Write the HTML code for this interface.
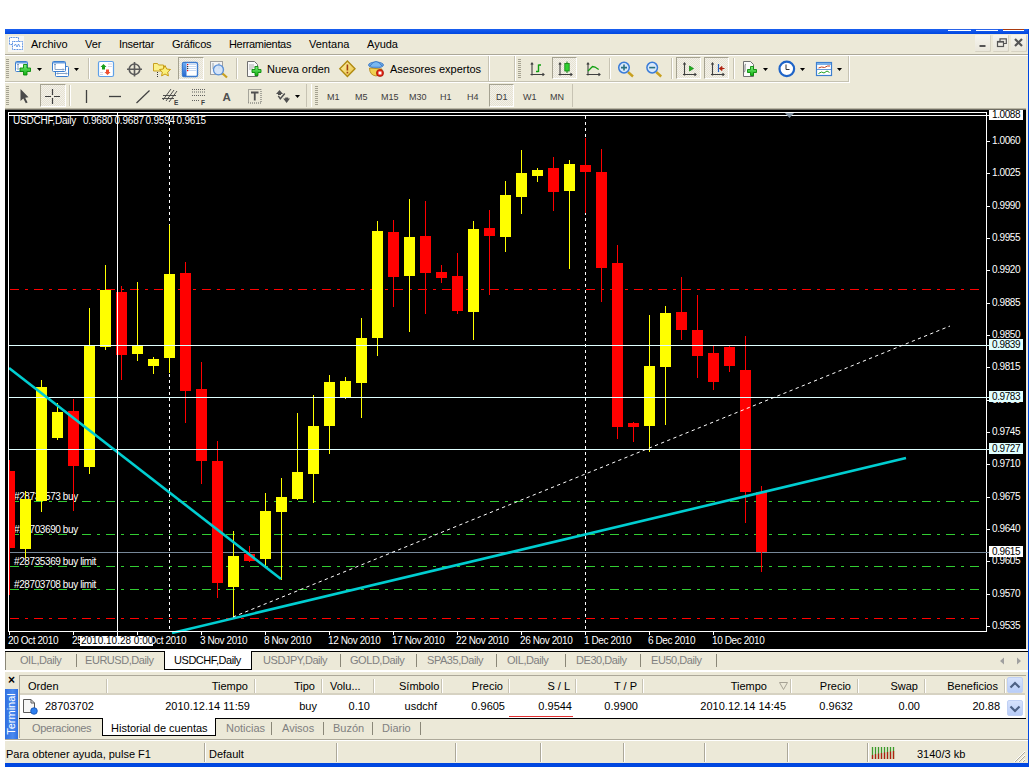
<!DOCTYPE html>
<html><head><meta charset="utf-8">
<style>
*{margin:0;padding:0;box-sizing:border-box}
html,body{width:1032px;height:767px;overflow:hidden;background:#fff;font-family:"Liberation Sans",sans-serif;font-size:11px;color:#000}
.a{position:absolute;white-space:nowrap}
.mi{position:absolute;top:37px;font-size:11px;line-height:14px}
.t1{position:absolute;top:62px;font-size:11px;line-height:14px}
.tf{position:absolute;top:91px;font-size:9px;line-height:12px;color:#3c3c3c}
.gray{color:#808080}
.grip{width:3px;background:repeating-linear-gradient(#fff 0 0px,#a5a291 0 1px,#ECE9D8 1px 2px)}
.tsep{width:1px;background:#c7c3b3;box-shadow:1px 0 0 #fff}
.pb{border:1px solid;border-color:#a5a291 #fff #fff #a5a291;background-color:#f3f1ea;background-image:linear-gradient(45deg,#e6e2d2 25%,transparent 25%,transparent 75%,#e6e2d2 75%),linear-gradient(45deg,#e6e2d2 25%,transparent 25%,transparent 75%,#e6e2d2 75%);background-size:2px 2px;background-position:0 0,1px 1px}
.wb{top:35px;width:16px;height:17px;background:linear-gradient(#f6f5ef,#e9e6da);border-radius:1px;box-shadow:inset -1px -1px 0 #d6d2c2}
.tb{top:653px;font-size:11px;line-height:14px;letter-spacing:-0.45px}
.sep{top:654px;width:1px;height:13px;background:#8a8778}
.tb2{top:721px;font-size:11px;line-height:14px}
.sep2{top:722px;width:1px;height:13px;background:#8a8778}
.th{top:679px;font-size:11px;line-height:14px}
.tr{top:699px;font-size:11px;line-height:14px}
.st{top:747px;font-size:11px;line-height:14px}
.ssep{top:743px;width:1px;height:19px;background:#aca899;box-shadow:1px 0 0 #fff}
.ct{font-family:"Liberation Sans",sans-serif;font-size:10px;fill:#fff;letter-spacing:-0.4px;white-space:pre}
</style></head><body>
<!-- window bg -->
<div class="a" style="left:5px;top:29px;width:1024px;height:738px;background:#ECE9D8"></div>
<!-- title bar strip -->
<div class="a" style="left:5px;top:29px;width:1024px;height:5px;background:linear-gradient(#1a5ff0,#0047e0)"></div>
<div class="a" style="left:1028px;top:29px;width:1px;height:738px;background:#0047e0"></div>
<div class="a" style="left:5px;top:763px;width:1024px;height:4px;background:#0047e0"></div>
<!-- MENU -->
<!-- app icon -->
<svg class="a" style="left:8px;top:36px" width="16" height="16">
<rect x="0" y="0" width="16" height="16" fill="#f7f6f2"/>
<rect x="1.5" y="1.5" width="9" height="7" fill="#fff" stroke="#4a86e0" stroke-dasharray="1 0.6"/>
<rect x="4.5" y="5.5" width="10" height="8" fill="#fff" stroke="#4a86e0" stroke-dasharray="1 0.6"/>
<path d="M6 10 L7.5 8 L9 11 L10.5 8 L12 11" fill="none" stroke="#4a86e0" stroke-width="0.8"/>
</svg>
<!-- window buttons -->
<div class="a wb" style="left:975px"></div>
<div class="a wb" style="left:993px"></div>
<div class="a wb" style="left:1011px"></div>
<svg class="a" style="left:975px;top:35px" width="52" height="17">
<rect x="4.5" y="10" width="6" height="2" fill="#555"/>
<rect x="22.5" y="6.5" width="6" height="5" fill="none" stroke="#555" stroke-width="1.2"/><rect x="22" y="6" width="7" height="1.6" fill="#555"/>
<path d="M25 6.5 V3.8 H31.3 V8.5 H29" fill="none" stroke="#555" stroke-width="1.2"/>
<path d="M40 4 L47 11 M47 4 L40 11" stroke="#555" stroke-width="2.2"/>
</svg>
<!-- title button bottoms -->
<div class="a" style="left:948px;top:29px;width:23px;height:1px;background:#2a63e8"></div>
<div class="a" style="left:948px;top:30px;width:23px;height:1px;background:#fff"></div>
<div class="a" style="left:976px;top:29px;width:22px;height:1px;background:#2a63e8"></div>
<div class="a" style="left:976px;top:30px;width:22px;height:1px;background:#fff"></div>
<div class="a" style="left:1003px;top:29px;width:21px;height:1px;background:#a83a10"></div>
<div class="a" style="left:1003px;top:30px;width:21px;height:1px;background:#fff"></div>

<!-- grippers -->
<div class="a grip" style="left:6px;top:59px;height:19px"></div>
<div class="a grip" style="left:6px;top:86px;height:19px"></div>
<div class="a grip" style="left:518px;top:59px;height:19px"></div>
<div class="a grip" style="left:315px;top:86px;height:19px"></div>
<!-- toolbar edges -->
<div class="a" style="left:488px;top:56px;width:1px;height:25px;background:#c7c3b3"></div>
<div class="a" style="left:514px;top:56px;width:1px;height:25px;background:#c7c3b3"></div><div class="a" style="left:515px;top:56px;width:1px;height:25px;background:#fff"></div><div class="a" style="left:489px;top:56px;width:1px;height:25px;background:#fff"></div>
<div class="a" style="left:848px;top:56px;width:1px;height:26px;background:#c7c3b3"></div><div class="a" style="left:849px;top:56px;width:1px;height:27px;background:#fff"></div>
<div class="a" style="left:306px;top:84px;width:1px;height:23px;background:#c7c3b3"></div>
<div class="a" style="left:311px;top:84px;width:1px;height:23px;background:#fff"></div>
<div class="a" style="left:572px;top:84px;width:1px;height:23px;background:#c7c3b3"></div>
<!-- separators -->
<div class="a tsep" style="left:88px;top:58px;height:21px"></div>
<div class="a tsep" style="left:236px;top:58px;height:21px"></div>
<div class="a tsep" style="left:609px;top:58px;height:21px"></div>
<div class="a tsep" style="left:671px;top:58px;height:21px"></div>
<div class="a tsep" style="left:733px;top:58px;height:21px"></div>
<div class="a tsep" style="left:69px;top:85px;height:21px"></div>
<!-- pressed buttons -->
<div class="a pb" style="left:178px;top:57px;width:26px;height:23px"></div>
<div class="a pb" style="left:552px;top:57px;width:25px;height:22px"></div>
<div class="a pb" style="left:676px;top:57px;width:25px;height:22px"></div>
<div class="a pb" style="left:704px;top:57px;width:25px;height:22px"></div>
<div class="a pb" style="left:40px;top:84px;width:26px;height:23px"></div>
<div class="a pb" style="left:489px;top:84px;width:25px;height:23px"></div>

<svg class="a" style="left:0;top:54px" width="860" height="30">
<defs>
<linearGradient id="gp" x1="0" y1="0" x2="0" y2="1"><stop offset="0" stop-color="#7cf07c"/><stop offset="1" stop-color="#10b010"/></linearGradient>
<linearGradient id="bl" x1="0" y1="0" x2="0" y2="1"><stop offset="0" stop-color="#6aaaf0"/><stop offset="1" stop-color="#2a6ad0"/></linearGradient>
</defs>
<!-- new chart -->
<rect x="15.5" y="7.5" width="12" height="10" rx="1" fill="#fff" stroke="#3c7fd0"/>
<rect x="16" y="8" width="11" height="1.5" fill="#6aa0e0"/>
<path d="M18 10 V15.5 M17 11 L18 10 L19 11 M17 14.5 L18 15.5 L19 14.5" stroke="#7a98c0" fill="none" stroke-width="0.9"/>
<path d="M23.5 10.5 h3.5 v3.5 h3.5 v3.5 h-3.5 v3.5 h-3.5 v-3.5 h-3.5 v-3.5 h3.5z" fill="url(#gp)" stroke="#0a8a0a" stroke-width="0.9"/>
<path d="M37 14 h5 l-2.5 3z" fill="#000"/>
<!-- profiles -->
<rect x="55.5" y="12.5" width="13" height="10" rx="1" fill="#fff" stroke="#3c7fd0"/>
<path d="M57 19.5 H67 M57.8 18.5 l-1 1 l1 1 M66.2 18.5 l1 1 l-1 1" stroke="#7a98c0" fill="none" stroke-width="0.9"/>
<rect x="52.5" y="7.5" width="13" height="10" rx="1" fill="#fff" stroke="#3c7fd0"/>
<rect x="53" y="8" width="12" height="1.5" fill="#6aa0e0"/>
<path d="M55 10 V15.5 H64 M54 11 l1 -1 l1 1 M63 14.5 l1 1 l-1 1" stroke="#7a98c0" fill="none" stroke-width="0.9"/>
<path d="M74 14 h5 l-2.5 3z" fill="#000"/>
<!-- market watch -->
<rect x="98.5" y="7.5" width="15" height="15" rx="1.5" fill="#fff" stroke="#5ea0e8" stroke-width="1.2"/>
<path d="M100.5 13 L103.5 10 L106.5 13 H105 V15.5 H102 V13z" fill="#1aa01a"/>
<path d="M104.5 18 L107.5 21 L110.5 18 H109 V15.5 H106 V18z" fill="#f05030"/>
<path d="M108 10 h4 M108 12.5 h4 M100 18.5 h3 M100 20.5 h3" stroke="#ccd" stroke-width="0.8"/>
<!-- data window crosshair -->
<circle cx="134.5" cy="15.3" r="5.3" fill="none" stroke="#5a5a5a" stroke-width="1.6"/>
<path d="M134.5 8 V22.5 M127 15.3 H142" stroke="#5a5a5a" stroke-width="1.6"/>
<!-- folder star -->
<path d="M153.5 9.5 h4 l1 1.5 h5 v6 h-10z" fill="#fbf08a" stroke="#c8a020"/>
<path d="M157.5 18 v5" stroke="#333" stroke-dasharray="1 1"/>
<path d="M165 11.5 l1.7 3.5 l3.8 0.5 l-2.8 2.6 l0.7 3.8 l-3.4 -1.9 l-3.4 1.9 l0.7 -3.8 l-2.8 -2.6 l3.8 -0.5z" fill="#fbf07a" stroke="#c89a10" stroke-width="1"/>
<!-- navigator -->
<rect x="182.5" y="8.5" width="15" height="14" rx="1.5" fill="#fff" stroke="#3c7bcf" stroke-width="1.4"/>
<rect x="183" y="9" width="3.5" height="13" fill="url(#bl)"/>
<path d="M188 10.5 H196 M188 12.5 H196 M188 14.5 H196 M188 16.5 H196" stroke="#b8cff0" stroke-width="0.8"/>
<rect x="187" y="10" width="1.2" height="1.2" fill="#f00"/><rect x="187" y="12" width="1.2" height="1.2" fill="#333"/><rect x="187" y="14" width="1.2" height="1.2" fill="#333"/><rect x="187" y="16" width="1.2" height="1.2" fill="#f00"/>
<!-- zoom chart -->
<rect x="210.5" y="7.5" width="12" height="13" fill="#f4f4f4" stroke="#a0a0a0"/>
<path d="M213 9 v6 M219 9 v6" stroke="#8090a0" stroke-width="0.8"/>
<path d="M222 19 L227 23.5" stroke="#c8a020" stroke-width="2.2"/>
<circle cx="218.5" cy="15.8" r="5" fill="#cfe0f8" fill-opacity="0.85" stroke="#5a90d8" stroke-width="1.3"/>
<!-- new order -->
<path d="M247.5 7.5 h7 l3 3 v12 h-10z" fill="#fafafa" stroke="#707070"/>
<path d="M249 11 h5 M249 13 h6 M249 15 h4" stroke="#999" stroke-width="0.8"/>
<path d="M255 12.5 h3 v3 h3 v3 h-3 v3 h-3 v-3 h-3 v-3 h3z" fill="url(#gp)" stroke="#0a8a0a" stroke-width="0.9"/>
<!-- diamond -->
<defs><linearGradient id="dg" x1="0" y1="0" x2="1" y2="1"><stop offset="0" stop-color="#fff4b0"/><stop offset="1" stop-color="#e8c040"/></linearGradient></defs><path d="M347.4 7 L355 14.7 L347.4 22.4 L339.8 14.7z" fill="url(#dg)" stroke="#b08a10" stroke-width="1.4"/>
<path d="M347.4 10.5 v6" stroke="#a04010" stroke-width="1.6"/><rect x="346.6" y="17.8" width="1.6" height="1.6" fill="#a04010"/>
<!-- expert hat -->
<ellipse cx="376" cy="11" rx="7.5" ry="3" fill="#6aa8e8" stroke="#3070c0" stroke-width="0.8"/>
<path d="M370 12 q6 -9 12 0" fill="#7ab8f0" stroke="#3070c0" stroke-width="0.8"/>
<path d="M369.5 14 q0 7 6.5 8 q5 -1 6 -7z" fill="#f0d050" stroke="#b08010" stroke-width="0.8"/>
<circle cx="380" cy="19" r="3.6" fill="#e02010" stroke="#901000" stroke-width="0.6"/>
<rect x="378.5" y="17.5" width="3" height="3" fill="#fff"/>
<!-- bar chart -->
<path d="M532 9 V21.5 M530.5 20.5 H544 M530.8 10.5 L532 9 L533.2 10.5 M542.5 19.3 L544 20.5 L542.5 21.7" stroke="#404040" fill="none" stroke-width="1.1"/>
<path d="M538.5 10.5 V18 M536 17.5 h2.5 M538.5 11 h2.5" stroke="#10a010" stroke-width="1.4" fill="none"/>
<!-- candle chart -->
<path d="M560 9 V21.5 M558.5 20.5 H572 M558.8 10.5 L560 9 L561.2 10.5 M570.5 19.3 L572 20.5 L570.5 21.7" stroke="#404040" fill="none" stroke-width="1.1"/>
<path d="M567 7.5 V19" stroke="#108010" stroke-width="1"/>
<rect x="564.8" y="9.5" width="4.4" height="7.5" fill="#30d030" stroke="#108010" stroke-width="0.8"/>
<!-- line chart -->
<path d="M588 9 V21.5 M586.5 20.5 H600 M586.8 10.5 L588 9 L589.2 10.5 M598.5 19.3 L600 20.5 L598.5 21.7" stroke="#404040" fill="none" stroke-width="1.1"/>
<path d="M588 17 L592.5 12.5 L595 13 L598.7 15.5" stroke="#10a010" stroke-width="1.3" fill="none"/>
<!-- zoom in/out -->
<path d="M628 18 L633 22.5" stroke="#c8a020" stroke-width="2.4"/>
<circle cx="624" cy="13.6" r="5.3" fill="#d8e8fa" stroke="#3a7cd8" stroke-width="1.5"/>
<path d="M621 13.6 h6 M624 10.6 v6" stroke="#2a7080" stroke-width="1.6"/>
<path d="M656.2 18 L661.2 22.5" stroke="#c8a020" stroke-width="2.4"/>
<circle cx="652.2" cy="13.6" r="5.3" fill="#d8e8fa" stroke="#3a7cd8" stroke-width="1.5"/>
<path d="M649.2 13.6 h6" stroke="#2a7080" stroke-width="1.6"/>
<!-- autoscroll -->
<path d="M684.5 9 V21.5 M683 20.5 H696 M683.3 10.5 L684.5 9 L685.7 10.5 M694.5 19.3 L696 20.5 L694.5 21.7" stroke="#404040" fill="none" stroke-width="1.1"/>
<path d="M689.5 12 L693.5 14.5 L689.5 17z" fill="#20b020" stroke="#108010" stroke-width="0.7"/>
<!-- chart shift -->
<path d="M712.5 9 V21.5 M711 20.5 H724 M711.3 10.5 L712.5 9 L713.7 10.5 M722.5 19.3 L724 20.5 L722.5 21.7" stroke="#404040" fill="none" stroke-width="1.1"/>
<path d="M718.5 10 V18" stroke="#2060c0" stroke-width="1.2"/>
<path d="M719.5 14.5 h5 M719.5 14.5 l2.5 -2 v4z" stroke="#b02010" fill="#b02010" stroke-width="1"/>
<!-- indicators -->
<path d="M743.5 7.5 h7 l3 3 v12 h-10z" fill="#fafafa" stroke="#707070"/>
<path d="M746 10 q-1 0 -1 2 v4 q0 2 -1 2" stroke="#666" fill="none" stroke-width="0.8"/>
<path d="M750.5 12.5 h3 v3 h3 v3 h-3 v3 h-3 v-3 h-3 v-3 h3z" fill="url(#gp)" stroke="#0a8a0a" stroke-width="0.9"/>
<path d="M763 14 h5 l-2.5 3z" fill="#000"/>
<!-- clock -->
<circle cx="786.8" cy="14.9" r="7.3" fill="#fff" stroke="#1e64c8" stroke-width="2.2"/>
<path d="M786 10.5 V15.5 H789.5" stroke="#333" stroke-width="1" fill="none"/>
<path d="M800 14 h5 l-2.5 3z" fill="#000"/>
<!-- templates -->
<rect x="816.5" y="8.5" width="15" height="13" fill="#fff" stroke="#3c7fd0" stroke-width="1.2"/>
<rect x="817" y="9" width="14" height="2" fill="#7ab0e8"/>
<path d="M817 15.5 H831" stroke="#3c7fd0" stroke-width="0.8"/>
<path d="M818.5 14 l3 -1 l3 0.5 l3 -1.5 l2.5 0" stroke="#c04020" fill="none" stroke-width="1"/>
<path d="M818.5 19.5 l3 -1.5 l2.5 1 l3 -2 l2.5 1.5" stroke="#20a020" fill="none" stroke-width="1"/>
<path d="M837 14 h5 l-2.5 3z" fill="#000"/>
</svg>

<svg class="a" style="left:0;top:82px" width="310" height="28">
<!-- arrow cursor -->
<path d="M20.5 7 L20.5 19 L23.3 16.5 L25.8 21.3 L27.6 20.4 L25.2 15.7 L28.5 15.3z" fill="#4a4a4a"/>
<!-- crosshair -->
<path d="M52.5 7 V13 M52.5 16 V22 M45 14.5 H51 M54 14.5 H60" stroke="#404040" stroke-width="1.2"/>
<!-- vertical line -->
<path d="M86.5 8 V21" stroke="#404040" stroke-width="1.3"/>
<!-- horizontal line -->
<path d="M109 14.5 H121" stroke="#404040" stroke-width="1.3"/>
<!-- trend line -->
<path d="M136.5 21 L149.5 8.5" stroke="#404040" stroke-width="1.2"/>
<!-- channel E -->
<path d="M163 18 L171 7 M166 19 L174 8 M169 20 L177 9 M163 13.5 H176 M162 16.5 H174" stroke="#404040" stroke-width="0.9"/>
<text x="174" y="23" font-family="Liberation Sans" font-size="6.5" font-weight="bold" fill="#404040">E</text>
<!-- fibo F -->
<path d="M192 7.5 H205 M192 10 H205 M192 13.5 H205 M192 18.5 H200" stroke="#505050" stroke-width="0.9" stroke-dasharray="1 1"/>
<text x="201" y="23" font-family="Liberation Sans" font-size="6.5" font-weight="bold" fill="#404040">F</text>
<!-- A -->
<text x="222.5" y="19.3" font-family="Liberation Sans" font-size="11.5" font-weight="bold" fill="#505050">A</text>
<!-- T label -->
<rect x="248.5" y="7.5" width="12.5" height="13.5" fill="none" stroke="#505050" stroke-width="0.9" stroke-dasharray="1 1"/>
<path d="M251 10.5 H258.5 M254.75 10.5 V18.5" stroke="#505050" stroke-width="1.8"/>
<!-- arrows -->
<path d="M276 12 L279.5 8 L283 12z M278 11.5 h3 v1.5 h-3z M283.2 16.5 L290 16.5 L286.6 21z M285.2 15.5 h3 v1.5 h-3z" fill="#505050"/>
<path d="M278.3 13.8 L280.3 16.8 L284.8 11.5" stroke="#505050" stroke-width="1.5" fill="none"/>
<path d="M295 13 h5 l-2.5 3z" fill="#000"/>
</svg>

<div class="mi" style="left:31px">Archivo</div>
<div class="mi" style="left:85px">Ver</div>
<div class="mi" style="left:119px;letter-spacing:-0.28px">Insertar</div>
<div class="mi" style="left:172px;letter-spacing:-0.2px">Gráficos</div>
<div class="mi" style="left:229px;letter-spacing:-0.33px">Herramientas</div>
<div class="mi" style="left:309px">Ventana</div>
<div class="mi" style="left:367px">Ayuda</div>
<div class="a" style="left:5px;top:54px;width:1023px;height:1px;background:#aca899"></div>
<div class="a" style="left:5px;top:55px;width:1023px;height:1px;background:#fff"></div>

<div class="a" style="left:5px;top:81px;width:844px;height:1px;background:#c5c2b2"></div>
<div class="a" style="left:5px;top:82px;width:845px;height:1px;background:#fff"></div>
<div class="t1" style="left:267px">Nueva orden</div>
<div class="t1" style="left:390px">Asesores expertos</div>
<div class="tf" style="left:327px">M1</div>
<div class="tf" style="left:355px">M5</div>
<div class="tf" style="left:381px">M15</div>
<div class="tf" style="left:409px">M30</div>
<div class="tf" style="left:440px">H1</div>
<div class="tf" style="left:467px">H4</div>
<div class="tf" style="left:496px">D1</div>
<div class="tf" style="left:523px">W1</div>
<div class="tf" style="left:550px">MN</div>
<div class="a" style="left:5px;top:108px;width:1021px;height:1px;background:#b9b5a3"></div>
<div class="a" style="left:5px;top:109px;width:1021px;height:1px;background:#6f6d63"></div>
<!-- CHART -->
<svg class="a" style="left:5px;top:110px" width="1021" height="539" viewBox="5 110 1021 539" shape-rendering="crispEdges">
<rect x="5" y="110" width="1021" height="539" fill="#000"/>
<line x1="169.5" y1="112" x2="169.5" y2="631" stroke="#fff" stroke-width="1" stroke-dasharray="3 3" stroke-dashoffset="2"/>
<line x1="585.5" y1="112" x2="585.5" y2="631" stroke="#fff" stroke-width="1" stroke-dasharray="3 3" stroke-dashoffset="2"/>
<line x1="10" y1="501.5" x2="979" y2="501.5" stroke="#32CD32" stroke-width="1" stroke-dasharray="9 6 3 6"/>
<line x1="10" y1="534.5" x2="979" y2="534.5" stroke="#32CD32" stroke-width="1" stroke-dasharray="9 6 3 6"/>
<line x1="10" y1="566.5" x2="979" y2="566.5" stroke="#32CD32" stroke-width="1" stroke-dasharray="9 6 3 6"/>
<line x1="10" y1="589.5" x2="979" y2="589.5" stroke="#32CD32" stroke-width="1" stroke-dasharray="9 6 3 6"/>
<line x1="10" y1="289.5" x2="979" y2="289.5" stroke="#FF0000" stroke-width="1" stroke-dasharray="9 6 3 6"/>
<line x1="10" y1="618.5" x2="979" y2="618.5" stroke="#FF0000" stroke-width="1" stroke-dasharray="9 6 3 6"/>
<rect x="9" y="552" width="977" height="1" fill="#778899"/>
<text x="14" y="499.5" class="ct">#28735573 buy</text>
<text x="14" y="532.5" class="ct">#28703690 buy</text>
<text x="14" y="564.5" class="ct">#28735369 buy limit</text>
<text x="14" y="587.5" class="ct">#28703708 buy limit</text>
<defs><clipPath id="pc"><rect x="9" y="113" width="977" height="518"/></clipPath></defs><g clip-path="url(#pc)"><rect x="9" y="460" width="1" height="135" fill="#FF0000"/>
<rect x="4" y="471" width="11" height="77" fill="#FF0000"/>
<rect x="25" y="491" width="1" height="67" fill="#FFFF00"/>
<rect x="20" y="499" width="11" height="50" fill="#FFFF00"/>
<rect x="41" y="380" width="1" height="132" fill="#FFFF00"/>
<rect x="36" y="387" width="11" height="114" fill="#FFFF00"/>
<rect x="57" y="403" width="1" height="37" fill="#FFFF00"/>
<rect x="52" y="412" width="11" height="26" fill="#FFFF00"/>
<rect x="73" y="399" width="1" height="112" fill="#FF0000"/>
<rect x="68" y="411" width="11" height="55" fill="#FF0000"/>
<rect x="89" y="308" width="1" height="166" fill="#FFFF00"/>
<rect x="84" y="345" width="11" height="122" fill="#FFFF00"/>
<rect x="105" y="265" width="1" height="85" fill="#FFFF00"/>
<rect x="100" y="290" width="11" height="57" fill="#FFFF00"/>
<rect x="121" y="286" width="1" height="94" fill="#FF0000"/>
<rect x="116" y="292" width="11" height="63" fill="#FF0000"/>
<rect x="137" y="282" width="1" height="79" fill="#FFFF00"/>
<rect x="132" y="346" width="11" height="8" fill="#FFFF00"/>
<rect x="153" y="357" width="1" height="17" fill="#FFFF00"/>
<rect x="148" y="359" width="11" height="7" fill="#FFFF00"/>
<rect x="169" y="225" width="1" height="148" fill="#FFFF00"/>
<rect x="164" y="274" width="11" height="84" fill="#FFFF00"/>
<rect x="185" y="262" width="1" height="161" fill="#FF0000"/>
<rect x="180" y="273" width="11" height="118" fill="#FF0000"/>
<rect x="201" y="362" width="1" height="122" fill="#FF0000"/>
<rect x="196" y="389" width="11" height="72" fill="#FF0000"/>
<rect x="217" y="441" width="1" height="157" fill="#FF0000"/>
<rect x="212" y="461" width="11" height="122" fill="#FF0000"/>
<rect x="233" y="531" width="1" height="87" fill="#FFFF00"/>
<rect x="228" y="556" width="11" height="31" fill="#FFFF00"/>
<rect x="249" y="546" width="1" height="16" fill="#FF0000"/>
<rect x="244" y="554" width="11" height="7" fill="#FF0000"/>
<rect x="265" y="493" width="1" height="74" fill="#FFFF00"/>
<rect x="260" y="511" width="11" height="48" fill="#FFFF00"/>
<rect x="281" y="478" width="1" height="102" fill="#FFFF00"/>
<rect x="276" y="497" width="11" height="15" fill="#FFFF00"/>
<rect x="297" y="413" width="1" height="87" fill="#FFFF00"/>
<rect x="292" y="472" width="11" height="27" fill="#FFFF00"/>
<rect x="313" y="395" width="1" height="108" fill="#FFFF00"/>
<rect x="308" y="426" width="11" height="48" fill="#FFFF00"/>
<rect x="329" y="375" width="1" height="79" fill="#FFFF00"/>
<rect x="324" y="382" width="11" height="44" fill="#FFFF00"/>
<rect x="345" y="377" width="1" height="22" fill="#FFFF00"/>
<rect x="340" y="381" width="11" height="16" fill="#FFFF00"/>
<rect x="361" y="318" width="1" height="100" fill="#FFFF00"/>
<rect x="356" y="338" width="11" height="45" fill="#FFFF00"/>
<rect x="377" y="221" width="1" height="135" fill="#FFFF00"/>
<rect x="372" y="231" width="11" height="107" fill="#FFFF00"/>
<rect x="393" y="220" width="1" height="87" fill="#FF0000"/>
<rect x="388" y="232" width="11" height="45" fill="#FF0000"/>
<rect x="409" y="199" width="1" height="133" fill="#FFFF00"/>
<rect x="404" y="237" width="11" height="39" fill="#FFFF00"/>
<rect x="425" y="201" width="1" height="113" fill="#FF0000"/>
<rect x="420" y="236" width="11" height="37" fill="#FF0000"/>
<rect x="441" y="265" width="1" height="18" fill="#FF0000"/>
<rect x="436" y="272" width="11" height="6" fill="#FF0000"/>
<rect x="457" y="253" width="1" height="61" fill="#FF0000"/>
<rect x="452" y="276" width="11" height="35" fill="#FF0000"/>
<rect x="473" y="221" width="1" height="119" fill="#FFFF00"/>
<rect x="468" y="229" width="11" height="83" fill="#FFFF00"/>
<rect x="489" y="210" width="1" height="85" fill="#FF0000"/>
<rect x="484" y="228" width="11" height="8" fill="#FF0000"/>
<rect x="505" y="181" width="1" height="71" fill="#FFFF00"/>
<rect x="500" y="195" width="11" height="42" fill="#FFFF00"/>
<rect x="521" y="150" width="1" height="64" fill="#FFFF00"/>
<rect x="516" y="173" width="11" height="24" fill="#FFFF00"/>
<rect x="537" y="168" width="1" height="14" fill="#FFFF00"/>
<rect x="532" y="170" width="11" height="6" fill="#FFFF00"/>
<rect x="553" y="157" width="1" height="54" fill="#FF0000"/>
<rect x="548" y="168" width="11" height="24" fill="#FF0000"/>
<rect x="569" y="160" width="1" height="109" fill="#FFFF00"/>
<rect x="564" y="164" width="11" height="27" fill="#FFFF00"/>
<rect x="585" y="138" width="1" height="75" fill="#FF0000"/>
<rect x="580" y="165" width="11" height="7" fill="#FF0000"/>
<rect x="601" y="149" width="1" height="153" fill="#FF0000"/>
<rect x="596" y="172" width="11" height="96" fill="#FF0000"/>
<rect x="617" y="245" width="1" height="194" fill="#FF0000"/>
<rect x="612" y="263" width="11" height="164" fill="#FF0000"/>
<rect x="633" y="422" width="1" height="20" fill="#FF0000"/>
<rect x="628" y="423" width="11" height="4" fill="#FF0000"/>
<rect x="649" y="315" width="1" height="137" fill="#FFFF00"/>
<rect x="644" y="366" width="11" height="60" fill="#FFFF00"/>
<rect x="665" y="306" width="1" height="119" fill="#FFFF00"/>
<rect x="660" y="313" width="11" height="54" fill="#FFFF00"/>
<rect x="681" y="277" width="1" height="63" fill="#FF0000"/>
<rect x="676" y="312" width="11" height="18" fill="#FF0000"/>
<rect x="697" y="295" width="1" height="83" fill="#FF0000"/>
<rect x="692" y="330" width="11" height="26" fill="#FF0000"/>
<rect x="713" y="346" width="1" height="44" fill="#FF0000"/>
<rect x="708" y="353" width="11" height="29" fill="#FF0000"/>
<rect x="729" y="345" width="1" height="27" fill="#FF0000"/>
<rect x="724" y="347" width="11" height="19" fill="#FF0000"/>
<rect x="745" y="336" width="1" height="187" fill="#FF0000"/>
<rect x="740" y="370" width="11" height="122" fill="#FF0000"/>
<rect x="761" y="486" width="1" height="86" fill="#FF0000"/>
<rect x="756" y="492" width="11" height="60" fill="#FF0000"/></g>
<rect x="9" y="345" width="977" height="1" fill="#E0FFFF"/>
<rect x="9" y="397" width="977" height="1" fill="#E0FFFF"/>
<rect x="9" y="449" width="977" height="1" fill="#E0FFFF"/>
<g shape-rendering="auto">
<line x1="9" y1="368" x2="281" y2="579" stroke="#00CED1" stroke-width="2.6"/>
<line x1="172" y1="633" x2="906" y2="458" stroke="#00CED1" stroke-width="2.6"/>
<line x1="233" y1="617" x2="950" y2="326" stroke="#fff" stroke-width="1" stroke-dasharray="3.3 3.3"/>
</g>
<rect x="8" y="112" width="979" height="1" fill="#fff"/>
<rect x="8" y="631" width="979" height="1" fill="#fff"/>
<rect x="8" y="112" width="1" height="520" fill="#fff"/>
<rect x="986" y="112" width="1" height="520" fill="#fff"/>
<rect x="8" y="115" width="979" height="1" fill="#fff"/>
<rect x="117" y="112" width="1" height="524" fill="#fff"/>
<path d="M785 113 L794 113 L789.5 118 Z" fill="#8090a0" shape-rendering="auto"/>
<rect x="987" y="141" width="3" height="1" fill="#fff"/>
<text x="992" y="144" class="ct">1.0060</text>
<rect x="987" y="173" width="3" height="1" fill="#fff"/>
<text x="992" y="176" class="ct">1.0025</text>
<rect x="987" y="206" width="3" height="1" fill="#fff"/>
<text x="992" y="209" class="ct">0.9990</text>
<rect x="987" y="238" width="3" height="1" fill="#fff"/>
<text x="992" y="241" class="ct">0.9955</text>
<rect x="987" y="270" width="3" height="1" fill="#fff"/>
<text x="992" y="273" class="ct">0.9920</text>
<rect x="987" y="303" width="3" height="1" fill="#fff"/>
<text x="992" y="306" class="ct">0.9885</text>
<rect x="987" y="335" width="3" height="1" fill="#fff"/>
<text x="992" y="338" class="ct">0.9850</text>
<rect x="987" y="367" width="3" height="1" fill="#fff"/>
<text x="992" y="370" class="ct">0.9815</text>
<rect x="987" y="400" width="3" height="1" fill="#fff"/>
<text x="992" y="403" class="ct">0.9780</text>
<rect x="987" y="432" width="3" height="1" fill="#fff"/>
<text x="992" y="435" class="ct">0.9745</text>
<rect x="987" y="464" width="3" height="1" fill="#fff"/>
<text x="992" y="467" class="ct">0.9710</text>
<rect x="987" y="497" width="3" height="1" fill="#fff"/>
<text x="992" y="500" class="ct">0.9675</text>
<rect x="987" y="529" width="3" height="1" fill="#fff"/>
<text x="992" y="532" class="ct">0.9640</text>
<rect x="987" y="561" width="3" height="1" fill="#fff"/>
<text x="992" y="564" class="ct">0.9605</text>
<rect x="987" y="594" width="3" height="1" fill="#fff"/>
<text x="992" y="597" class="ct">0.9570</text>
<rect x="987" y="626" width="3" height="1" fill="#fff"/>
<text x="992" y="629" class="ct">0.9535</text>
<rect x="986" y="115" width="3" height="1" fill="#fff"/>
<rect x="989" y="109" width="34" height="11" fill="#fff"/>
<text x="992" y="118" class="ct" style="fill:#000">1.0088</text>
<rect x="986" y="345" width="3" height="1" fill="#E0FFFF"/>
<rect x="989" y="339" width="34" height="11" fill="#E0FFFF"/>
<text x="992" y="348" class="ct" style="fill:#000">0.9839</text>
<rect x="986" y="397" width="3" height="1" fill="#E0FFFF"/>
<rect x="989" y="391" width="34" height="11" fill="#E0FFFF"/>
<text x="992" y="400" class="ct" style="fill:#000">0.9783</text>
<rect x="986" y="449" width="3" height="1" fill="#E0FFFF"/>
<rect x="989" y="443" width="34" height="11" fill="#E0FFFF"/>
<text x="992" y="452" class="ct" style="fill:#000">0.9727</text>
<rect x="986" y="552" width="3" height="1" fill="#778899"/>
<rect x="989" y="546" width="34" height="11" fill="#fff"/>
<text x="992" y="555" class="ct" style="fill:#000">0.9615</text>
<rect x="9" y="632" width="1" height="3" fill="#fff"/>
<text x="8" y="644" class="ct">20 Oct 2010</text>
<rect x="73" y="632" width="1" height="3" fill="#fff"/>
<text x="72" y="644" class="ct">25 Oct 2010</text>
<rect x="137" y="632" width="1" height="3" fill="#fff"/>
<text x="136" y="644" class="ct">29 Oct 2010</text>
<rect x="201" y="632" width="1" height="3" fill="#fff"/>
<text x="200" y="644" class="ct">3 Nov 2010</text>
<rect x="265" y="632" width="1" height="3" fill="#fff"/>
<text x="264" y="644" class="ct">8 Nov 2010</text>
<rect x="329" y="632" width="1" height="3" fill="#fff"/>
<text x="328" y="644" class="ct">12 Nov 2010</text>
<rect x="393" y="632" width="1" height="3" fill="#fff"/>
<text x="392" y="644" class="ct">17 Nov 2010</text>
<rect x="457" y="632" width="1" height="3" fill="#fff"/>
<text x="456" y="644" class="ct">22 Nov 2010</text>
<rect x="521" y="632" width="1" height="3" fill="#fff"/>
<text x="520" y="644" class="ct">26 Nov 2010</text>
<rect x="585" y="632" width="1" height="3" fill="#fff"/>
<text x="584" y="644" class="ct">1 Dec 2010</text>
<rect x="649" y="632" width="1" height="3" fill="#fff"/>
<text x="648" y="644" class="ct">6 Dec 2010</text>
<rect x="713" y="632" width="1" height="3" fill="#fff"/>
<text x="712" y="644" class="ct">10 Dec 2010</text>
<rect x="80" y="636" width="73" height="10" fill="#fff"/>
<text x="81" y="644" class="ct" style="fill:#000;letter-spacing:0">2010.10.28 0:00</text>
<text x="13" y="124" class="ct" style="letter-spacing:-0.2px">USDCHF,Daily</text>
<text x="83" y="124" class="ct" style="letter-spacing:-0.2px">0.9680</text>
<text x="114.5" y="124" class="ct" style="letter-spacing:-0.2px">0.9687</text>
<text x="145.5" y="124" class="ct" style="letter-spacing:-0.2px">0.9594</text>
<text x="176.5" y="124" class="ct" style="letter-spacing:-0.2px">0.9615</text>
</svg>

<div class="a" style="left:5px;top:649px;width:1023px;height:2px;background:#fff"></div>
<div class="a" style="left:5px;top:651px;width:1023px;height:1px;background:#000"></div>
<div class="a" style="left:5px;top:652px;width:1px;height:18px;background:#8a8778"></div>
<div class="a" style="left:164px;top:651px;width:88px;height:19px;background:#fff;border-left:1px solid #000;border-right:1px solid #000;border-bottom:1px solid #000"></div>
<div class="a tb gray" style="left:20px">OIL,Daily</div>
<div class="a sep" style="left:76px"></div>
<div class="a tb gray" style="left:85px">EURUSD,Daily</div>
<div class="a tb" style="left:174px">USDCHF,Daily</div>
<div class="a tb gray" style="left:263px">USDJPY,Daily</div>
<div class="a sep" style="left:340px"></div>
<div class="a tb gray" style="left:350px">GOLD,Daily</div>
<div class="a sep" style="left:416px"></div>
<div class="a tb gray" style="left:427px">SPA35,Daily</div>
<div class="a sep" style="left:496px"></div>
<div class="a tb gray" style="left:507px">OIL,Daily</div>
<div class="a sep" style="left:565px"></div>
<div class="a tb gray" style="left:576px">DE30,Daily</div>
<div class="a sep" style="left:640px"></div>
<div class="a tb gray" style="left:651px">EU50,Daily</div>
<div class="a sep" style="left:716px"></div>
<svg class="a" style="left:998px;top:657px" width="24" height="8"><path d="M2 4 L6 0.5 L6 7.5Z M23 4 L19 0.5 L19 7.5Z" fill="#a0a0a0"/></svg>
<div class="a" style="left:5px;top:670px;width:1023px;height:2px;background:#fff"></div>


<!-- terminal -->
<div class="a" style="left:8px;top:675px;font-size:12px;font-weight:bold;line-height:10px">&#215;</div>
<div class="a" style="left:5px;top:689px;width:13px;height:50px;background:linear-gradient(90deg,#2f6fe0,#4a8af0 60%,#2f6fe0)"></div>
<div class="a" style="left:5px;top:739px;width:50px;height:13px;transform-origin:0 0;transform:rotate(-90deg);color:#fff;font-size:11px;line-height:13px;text-align:center">Terminal</div>
<!-- grid -->
<div class="a" style="left:19px;top:675px;width:1007px;height:1px;background:#aca899"></div>
<div class="a" style="left:19px;top:675px;width:1px;height:63px;background:#aca899"></div>
<div class="a" style="left:20px;top:676px;width:1005px;height:19px;background:#ECE9D8;border-bottom:2px solid #d6d2c2"></div>
<div class="a" style="left:20px;top:695px;width:1005px;height:23px;background:#fff"></div>
<div class="a" style="left:19px;top:718px;width:1007px;height:1px;background:#000"></div>
<div class="a th" style="left:28px">Orden</div>
<div class="a th" style="right:784px">Tiempo</div>
<div class="a th" style="right:717px">Tipo</div>
<div class="a th" style="left:330px">Volu...</div>
<div class="a th" style="left:399px">Símbolo</div>
<div class="a th" style="right:529px">Precio</div>
<div class="a th" style="right:462px">S / L</div>
<div class="a th" style="right:395px">T / P</div>
<div class="a th" style="right:265px">Tiempo</div>
<div class="a th" style="right:181px">Precio</div>
<div class="a th" style="right:114px">Swap</div>
<div class="a th" style="right:34px">Beneficios</div>
<div class="a" style="left:106px;top:679px;width:1px;height:14px;background:#c7c3b3"></div><div class="a" style="left:107px;top:679px;width:1px;height:14px;background:#fff"></div>
<div class="a" style="left:254px;top:679px;width:1px;height:14px;background:#c7c3b3"></div><div class="a" style="left:255px;top:679px;width:1px;height:14px;background:#fff"></div>
<div class="a" style="left:321px;top:679px;width:1px;height:14px;background:#c7c3b3"></div><div class="a" style="left:322px;top:679px;width:1px;height:14px;background:#fff"></div>
<div class="a" style="left:373px;top:679px;width:1px;height:14px;background:#c7c3b3"></div><div class="a" style="left:374px;top:679px;width:1px;height:14px;background:#fff"></div>
<div class="a" style="left:441px;top:679px;width:1px;height:14px;background:#c7c3b3"></div><div class="a" style="left:442px;top:679px;width:1px;height:14px;background:#fff"></div>
<div class="a" style="left:508px;top:679px;width:1px;height:14px;background:#c7c3b3"></div><div class="a" style="left:509px;top:679px;width:1px;height:14px;background:#fff"></div>
<div class="a" style="left:575px;top:679px;width:1px;height:14px;background:#c7c3b3"></div><div class="a" style="left:576px;top:679px;width:1px;height:14px;background:#fff"></div>
<div class="a" style="left:642px;top:679px;width:1px;height:14px;background:#c7c3b3"></div><div class="a" style="left:643px;top:679px;width:1px;height:14px;background:#fff"></div>
<div class="a" style="left:790px;top:679px;width:1px;height:14px;background:#c7c3b3"></div><div class="a" style="left:791px;top:679px;width:1px;height:14px;background:#fff"></div>
<div class="a" style="left:857px;top:679px;width:1px;height:14px;background:#c7c3b3"></div><div class="a" style="left:858px;top:679px;width:1px;height:14px;background:#fff"></div>
<div class="a" style="left:924px;top:679px;width:1px;height:14px;background:#c7c3b3"></div><div class="a" style="left:925px;top:679px;width:1px;height:14px;background:#fff"></div>
<div class="a" style="left:1004px;top:679px;width:1px;height:14px;background:#c7c3b3"></div><div class="a" style="left:1005px;top:679px;width:1px;height:14px;background:#fff"></div>
<svg class="a" style="left:779px;top:681px" width="9" height="9"><path d="M0.5 1.5 L8.5 1.5 L4.5 8.5 Z" fill="none" stroke="#a6a295" stroke-width="1"/></svg>
<div class="a tr" style="left:45px">28703702</div>
<div class="a tr" style="right:782px">2010.12.14 11:59</div>
<div class="a tr" style="right:715px">buy</div>
<div class="a tr" style="right:662px">0.10</div>
<div class="a tr" style="right:595px">usdchf</div>
<div class="a tr" style="right:527px">0.9605</div>
<div class="a tr" style="right:460px">0.9544</div>
<div class="a tr" style="right:394px">0.9900</div>
<div class="a tr" style="right:246px">2010.12.14 14:45</div>
<div class="a tr" style="right:179px">0.9632</div>
<div class="a tr" style="right:112px">0.00</div>
<div class="a tr" style="right:32px">20.88</div>
<div class="a" style="left:509px;top:716px;width:64px;height:1px;background:#e03030"></div>
<svg class="a" style="left:22px;top:698px" width="17" height="17"><path d="M1.5 1.5 H9 L12.5 5 V14.5 H1.5 Z" fill="#f6f6f6" stroke="#5a5a5a"/><path d="M9 1.5 V5 H12.5" fill="none" stroke="#5a5a5a"/><circle cx="12" cy="13" r="3.3" fill="#2d7ff0" stroke="#1450b0" stroke-width="0.8"/></svg>
<div class="a" style="left:1007px;top:677px;width:16px;height:16px;border-radius:2px;background:linear-gradient(#d6e2fc,#b8cdf8);border:1px solid #c0d0f4"></div>
<svg class="a" style="left:1009px;top:681px" width="12" height="8"><path d="M1.5 6.5 L6 2 L10.5 6.5" fill="none" stroke="#4d6185" stroke-width="2.2"/></svg>
<div class="a" style="left:1007px;top:700px;width:16px;height:16px;border-radius:2px;background:linear-gradient(#d6e2fc,#b8cdf8);border:1px solid #c0d0f4"></div>
<svg class="a" style="left:1009px;top:705px" width="12" height="8"><path d="M1.5 1.5 L6 6 L10.5 1.5" fill="none" stroke="#4d6185" stroke-width="2.2"/></svg>
<!-- bottom tabs -->
<div class="a" style="left:102px;top:718px;width:114px;height:18px;background:#fff;border-left:1px solid #000;border-right:1px solid #000;border-bottom:1px solid #000"></div>
<div class="a tb2 gray" style="left:32px;letter-spacing:-0.28px">Operaciones</div>
<div class="a tb2" style="left:111px">Historial de cuentas</div>
<div class="a tb2 gray" style="left:226px">Noticias</div>
<div class="a sep2" style="left:271px"></div>
<div class="a tb2 gray" style="left:282px">Avisos</div>
<div class="a sep2" style="left:323px"></div>
<div class="a tb2 gray" style="left:333px">Buzón</div>
<div class="a sep2" style="left:372px"></div>
<div class="a tb2 gray" style="left:382px">Diario</div>
<div class="a sep2" style="left:420px"></div>


<div class="a" style="left:5px;top:739px;width:1023px;height:1px;background:#aca899"></div>
<div class="a" style="left:5px;top:740px;width:1023px;height:1px;background:#fff"></div>
<div class="a st" style="left:6px">Para obtener ayuda, pulse F1</div>
<div class="a ssep" style="left:204px"></div>
<div class="a st" style="left:209px">Default</div>
<div class="a ssep" style="left:336px"></div>
<div class="a ssep" style="left:455px"></div>
<div class="a ssep" style="left:540px"></div>
<div class="a ssep" style="left:623px"></div>
<div class="a ssep" style="left:704px"></div>
<div class="a ssep" style="left:787px"></div>
<div class="a ssep" style="left:867px"></div>
<div class="a st" style="left:917px">3140/3 kb</div>
<svg class="a" style="left:871px;top:746px" width="26" height="14">
<path d="M1.5 1 V13 M4.5 1 V13 M7.5 1 V13 M10.5 1 V13 M13.5 1 V13 M16.5 1 V13 M19.5 1 V13 M22.5 1 V13" stroke="#3a9a2a" stroke-width="1.3"/>
<path d="M1.5 9 V13 M4.5 8 V13 M7.5 7.5 V13 M10.5 7 V13 M13.5 6.5 V13 M16.5 6 V13 M19.5 5.5 V13 M22.5 5 V13" stroke="#b02010" stroke-width="1.3"/>
</svg>
<svg class="a" style="left:1013px;top:750px" width="13" height="13">
<path d="M12 1 L1 12 M12 5 L5 12 M12 9 L9 12" stroke="#fff" stroke-width="1"/>
<path d="M12 2 L2 12 M12 6 L6 12 M12 10 L10 12" stroke="#aca899" stroke-width="1"/>
</svg>

</body></html>
